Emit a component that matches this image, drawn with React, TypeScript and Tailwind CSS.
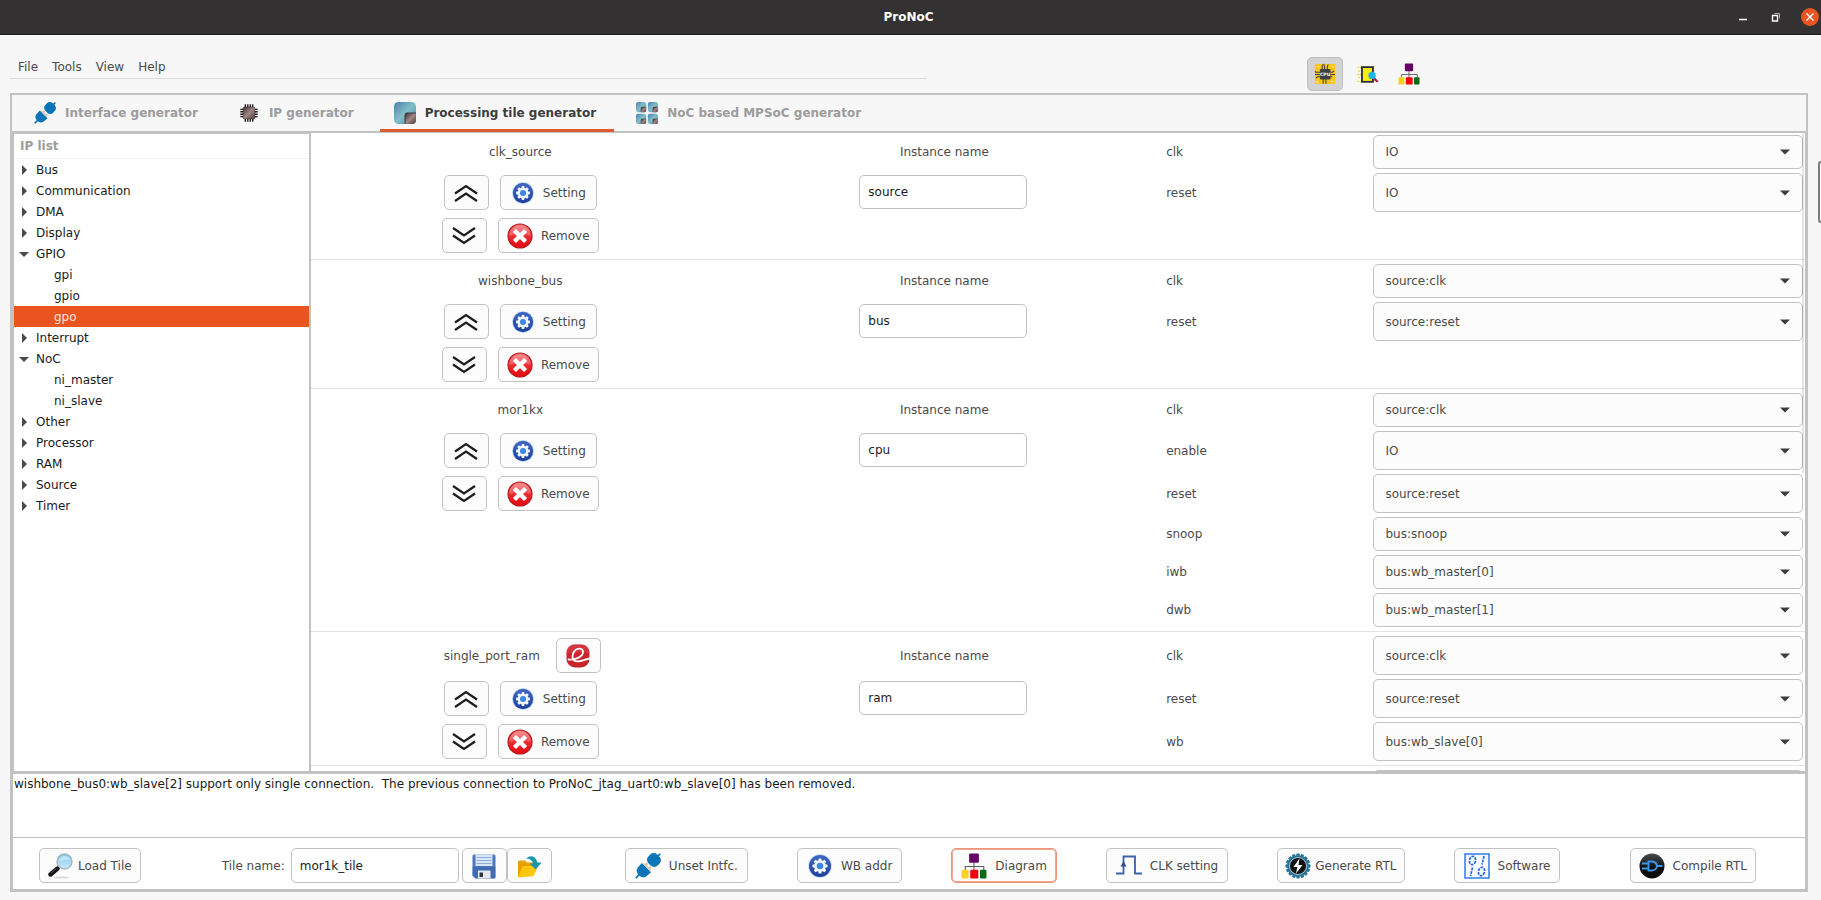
import { useState } from "react";
import type { ReactNode } from "react";

type Node = { name: string; open?: boolean; children?: string[] };

type Port = { name: string; value: string };

type Device = { module: string; instance: string; hasEditor?: boolean; ports: Port[] };

const IP_LIST: Node[] = [
  { name: "Bus" },
  { name: "Communication" },
  { name: "DMA" },
  { name: "Display" },
  { name: "GPIO", open: true, children: ["gpi", "gpio", "gpo"] },
  { name: "Interrupt" },
  { name: "NoC", open: true, children: ["ni_master", "ni_slave"] },
  { name: "Other" },
  { name: "Processor" },
  { name: "RAM" },
  { name: "Source" },
  { name: "Timer" },
];

const DEVICES: Device[] = [
  {
    module: "clk_source",
    instance: "source",
    ports: [
      { name: "clk", value: "IO" },
      { name: "reset", value: "IO" },
    ],
  },
  {
    module: "wishbone_bus",
    instance: "bus",
    ports: [
      { name: "clk", value: "source:clk" },
      { name: "reset", value: "source:reset" },
    ],
  },
  {
    module: "mor1kx",
    instance: "cpu",
    ports: [
      { name: "clk", value: "source:clk" },
      { name: "enable", value: "IO" },
      { name: "reset", value: "source:reset" },
      { name: "snoop", value: "bus:snoop" },
      { name: "iwb", value: "bus:wb_master[0]" },
      { name: "dwb", value: "bus:wb_master[1]" },
    ],
  },
  {
    module: "single_port_ram",
    instance: "ram",
    hasEditor: true,
    ports: [
      { name: "clk", value: "source:clk" },
      { name: "reset", value: "source:reset" },
      { name: "wb", value: "bus:wb_slave[0]" },
    ],
  },
];

const MESSAGE =
  "wishbone_bus0:wb_slave[2] support only single connection.  The previous connection to ProNoC_jtag_uart0:wb_slave[0] has been removed.";

const BUTTON =
  "flex h-[35px] shrink-0 items-center justify-center rounded-[5px] border border-[#c2c2c2] bg-[#fcfcfc] text-[#4a4a4a] hover:bg-white";

const TEETH = [0, 45, 90, 135, 180, 225, 270, 315];

// Gradients shared by every icon below.
function IconDefs() {
  return (
    <svg className="absolute size-0" aria-hidden="true">
      <defs>
        <linearGradient id="tile" x1="0" y1="0" x2="1" y2="1">
          <stop offset="0" stopColor="#4a80b0" />
          <stop offset="0.5" stopColor="#83bfc8" />
          <stop offset="1" stopColor="#3f86a6" />
        </linearGradient>
        <linearGradient id="core" x1="0" y1="0" x2="1" y2="1">
          <stop offset="0" stopColor="#3f2f31" />
          <stop offset="0.5" stopColor="#a08585" />
          <stop offset="1" stopColor="#4f3d3f" />
        </linearGradient>
        <linearGradient id="blue" x1="0" y1="0" x2="0" y2="1">
          <stop offset="0" stopColor="#4268c4" />
          <stop offset="1" stopColor="#1c3f9a" />
        </linearGradient>
        <linearGradient id="red" x1="0" y1="0" x2="0" y2="1">
          <stop offset="0" stopColor="#f3797b" />
          <stop offset="0.5" stopColor="#ea2d33" />
          <stop offset="1" stopColor="#e6060d" />
        </linearGradient>
        <linearGradient id="lens" x1="0" y1="0" x2="0" y2="1">
          <stop offset="0" stopColor="#79c6ea" />
          <stop offset="1" stopColor="#c9ecfb" />
        </linearGradient>
        <linearGradient id="dark" x1="0" y1="0" x2="0" y2="1">
          <stop offset="0" stopColor="#4a4d50" />
          <stop offset="0.6" stopColor="#0c0d0f" />
        </linearGradient>
      </defs>
    </svg>
  );
}

function Svg({ className, box = "0 0 24 24", children }: { className: string; box?: string; children: ReactNode }) {
  return (
    <svg className={className} viewBox={box} fill="none" aria-hidden="true">
      {children}
    </svg>
  );
}

function PlugIcon({ className }: { className: string }) {
  return (
    <Svg className={className}>
      <g transform="rotate(45 12 12)">
        <path d="M12 -4v5M12 23v5" stroke="#0b75b8" strokeWidth="1.6" />
        <rect x="6" y="-1.5" width="12" height="11.5" rx="4.5" fill="#0b75b8" />
        <path d="M9 10.5h2v4H9zM13.5 10.5h2v3h-2z" fill="#d8c9a6" />
        <path d="M6 14h12l-.4 6q-1 4-5.6 4t-5.600-4z" fill="#0b75b8" />
        <path d="M7.500 13.200h9" stroke="#d3cdbd" strokeWidth="1.6" />
      </g>
    </Svg>
  );
}

function ChipIcon({ className }: { className: string }) {
  return (
    <Svg className={className}>
      <path
        d="M8 2.500v19M10.700 2.500v19M13.400 2.500v19M16 2.500v19M2.500 8h19M2.500 10.700h19M2.500 13.400h19M2.500 16h19"
        stroke="#241a1c"
        strokeWidth="1.500"
      />
      <rect x="5.500" y="5.500" width="13" height="13" rx="1.500" fill="url(#core)" stroke="#3a2c2e" strokeWidth="0.600" />
    </Svg>
  );
}

function TileShape() {
  return (
    <>
      <rect width="24" height="24" rx="5" fill="url(#tile)" />
      <path d="M12 14q0-2 2-2h10v8q0 4-4 4h-8z" fill="url(#core)" />
      <path d="M12 24V14q0-2 2-2h10" stroke="#33363d" strokeWidth="1" />
    </>
  );
}

function TileIcon({ className }: { className: string }) {
  return (
    <Svg className={className}>
      <TileShape />
    </Svg>
  );
}

function MpsocIcon({ className }: { className: string }) {
  return (
    <Svg className={className} box="0 0 52 52">
      <TileShape />
      <g transform="translate(28 0)">
        <TileShape />
      </g>
      <g transform="translate(0 28)">
        <TileShape />
      </g>
      <g transform="translate(28 28)">
        <TileShape />
      </g>
    </Svg>
  );
}

function CpuIcon({ className }: { className: string }) {
  return (
    <Svg className={className}>
      <rect x="1" y="1" width="22" height="22" rx="1" fill="#fcc419" />
      <path d="M2 20l3 2M19 3l3 2M3 4h3M18 20h4" stroke="#ffe58a" strokeWidth="1.4" />
      <path
        d="M9 8V1.500M11.500 8V4l-1-3M14.500 8V4l1-2.500M10 16v6.500M13 16v6.500M8 10H2l-1-1M8 12.500H1M8 15H4l-2 1.500M16 10h4l2-1.500M16 12.500h7M16 15h4"
        stroke="#3a3a42"
        strokeWidth="1.100"
      />
      <rect x="6.500" y="6.500" width="11.500" height="11.500" rx="1" fill="#3f4048" />
      <text x="12.200" y="14.200" textAnchor="middle" fontSize="5" fontWeight="700" fill="#ffffff">
        CPU
      </text>
    </Svg>
  );
}

function InspectIcon({ className }: { className: string }) {
  return (
    <Svg className={className}>
      <path
        d="M1 5h5M2 9h3M1 12.500h5M2 16h3M1 20h5M19 4h3M19 19h3"
        stroke="#f2d64b"
        strokeWidth="1.500"
        strokeDasharray="2 1"
      />
      <rect x="6.500" y="4.500" width="12" height="16" fill="#f8ec10" stroke="#2f2f2f" strokeWidth="2" />
      <path d="M19.500 16.500l4 4" stroke="#b3125e" strokeWidth="2.400" />
      <circle cx="17.500" cy="13.500" r="4" fill="#1fb5ec" />
    </Svg>
  );
}

function DiagramIcon({ className }: { className: string }) {
  return (
    <Svg className={className}>
      <path d="M12 9v7M4 16v-3.500h17V16" stroke="#5c5c5c" strokeWidth="1" />
      <rect x="7.500" y="0.500" width="9" height="8.500" rx="1" fill="#660066" />
      <rect x="0.500" y="15.500" width="6.500" height="8" rx="1" fill="#ffd021" />
      <rect x="8.500" y="15.500" width="7.500" height="8" rx="1" fill="#f6000c" />
      <rect x="17.500" y="15.500" width="6" height="8" rx="1" fill="#076b13" />
    </Svg>
  );
}

function GearIcon({ className }: { className: string }) {
  return (
    <Svg className={className} box="0 0 26 26">
      <circle cx="13" cy="13" r="12" fill="#cfe4fa" />
      <circle cx="13" cy="13" r="11" fill="url(#blue)" />
      <g fill="#f1f6ff">
        {TEETH.map((a) => (
          <rect key={a} x="11.500" y="5.500" width="3" height="3.500" rx="0.600" transform={`rotate(${a} 13 13)`} />
        ))}
      </g>
      <circle cx="13" cy="13" r="4.600" fill="#3f86e6" stroke="#f1f6ff" strokeWidth="2.600" />
    </Svg>
  );
}

function RemoveIcon({ className }: { className: string }) {
  return (
    <Svg className={className} box="0 0 26 26">
      <circle cx="13" cy="13" r="12" fill="url(#red)" stroke="#b81a20" strokeWidth="1.200" />
      <path d="M2.500 13q0-10 10.500-10.500T23.500 13q-10-4-21 0z" fill="#ffffff" opacity="0.200" />
      <path d="M9 9l8 8M17 9l-8 8" stroke="#ffffff" strokeWidth="4.400" strokeLinecap="square" />
    </Svg>
  );
}

function ScriptIcon({ className }: { className: string }) {
  return (
    <Svg className={className}>
      <rect x="0.500" y="0.500" width="23" height="23" rx="8.500" fill="#c9252d" />
      <path d="M.5 9q0-8.500 8.500-8.500h6q8.500 0 8.500 8.500z" fill="#d94148" opacity="0.600" />
      <path
        d="M2.500 15.500c6.500.5 14.500-2.500 14.500-7.400 0-2.300-1.800-3.400-3.900-3.400-3.700 0-6.600 3.700-6.600 7.700 0 3.500 2.300 5 5.500 5 4 0 7.400-2.200 11.500-2.900"
        stroke="#ffffff"
        strokeWidth="1.800"
        strokeLinecap="round"
      />
    </Svg>
  );
}

function UpIcon() {
  return (
    <Svg className="h-[18px] w-6" box="0 0 24 18">
      <path d="M1 9.500L12 2l11 7.500M1 17l11-7.500L23 17" stroke="#1c1c1c" strokeWidth="2.200" />
    </Svg>
  );
}

function DownIcon() {
  return (
    <Svg className="h-[18px] w-6" box="0 0 24 18">
      <path d="M1 1l11 7.500L23 1M1 8.500L12 16l11-7.500" stroke="#1c1c1c" strokeWidth="2.200" />
    </Svg>
  );
}

function MagnifierIcon({ className }: { className: string }) {
  return (
    <Svg className={className} box="0 0 26 26">
      <ellipse cx="13" cy="24.500" rx="8" ry="1" fill="#d9d9d9" />
      <path d="M11 14l-3 3" stroke="#9aa0a6" strokeWidth="2" />
      <path d="M9.500 15.500L2.500 21.500" stroke="#151515" strokeWidth="4.400" strokeLinecap="round" />
      <path d="M8.500 15.500L3 20" stroke="#6a6a6a" strokeWidth="0.800" />
      <circle cx="16.500" cy="8.500" r="7.500" fill="url(#lens)" stroke="#a9b4bb" strokeWidth="1.400" />
      <path d="M11 8q1-4.500 6-5 4 .500 5 4-5-1-11 1z" fill="#ffffff" opacity="0.450" />
    </Svg>
  );
}

function SaveIcon({ className }: { className: string }) {
  return (
    <Svg className={className} box="0 0 26 26">
      <path d="M1.500 3q0-1.500 1.500-1.500h20q1.500 0 1.500 1.500v21q0 1.500-1.500 1.500H4.500l-3-3z" fill="#4b76bd" />
      <path d="M1.500 14h23v10q0 1.500-1.500 1.500H4.500l-3-3z" fill="#3a61a8" opacity="0.500" />
      <rect x="4.500" y="1.500" width="17" height="11.500" fill="#d8e5f6" />
      <path d="M5.500 4.500h15M5.500 7.500h15M5.500 10.500h15" stroke="#8eacd8" strokeWidth="1" />
      <rect x="7" y="17.500" width="12.500" height="8" fill="#e6e8ea" />
      <rect x="8.500" y="19.500" width="3.500" height="4.500" fill="#2b3442" />
    </Svg>
  );
}

function OpenIcon({ className }: { className: string }) {
  return (
    <Svg className={className} box="0 0 26 26">
      <path d="M2 24V9q0-1.500 1.500-1.500H9l2 2h8.500V14L16 22z" fill="#e6a000" />
      <path d="M2 24.500L6 14.500q.5-1.500 2-1.500h14l-3.500 8.500q-.5 1.500-2 1.800z" fill="#fcc70d" />
      <path d="M10 5.500Q18-.5 21.500 9.500h4l-5.800 7-6-6h3.500q-1.700-5-7.200-5z" fill="#1796ad" />
    </Svg>
  );
}

function ClockIcon({ className }: { className: string }) {
  return (
    <Svg className={className} box="0 0 26 26">
      <path d="M0 20.500h7.500V3.500h11.500v17h7" stroke="#3a64a6" strokeWidth="1.800" />
      <path d="M7.500 8l3 5.500h-6z" fill="#2f4f86" />
    </Svg>
  );
}

function GenerateIcon({ className }: { className: string }) {
  return (
    <Svg className={className} box="0 0 26 26">
      <g fill="#24739a">
        {[...TEETH, 22, 67, 112, 157, 202, 247, 292, 337].map((a) => (
          <rect key={a} x="11.300" y="0.500" width="3.400" height="4" rx="1" transform={`rotate(${a} 13 13)`} />
        ))}
      </g>
      <circle cx="13" cy="13" r="10.600" fill="#24739a" />
      <circle cx="13" cy="13" r="8.500" fill="#101214" stroke="#d5e4ec" strokeWidth="0.800" />
      <path d="M14.500 5.500L8.500 14h3.800L11 20.500 17.500 12h-4z" fill="#ffffff" />
    </Svg>
  );
}

function SoftwareIcon({ className }: { className: string }) {
  return (
    <Svg className={className} box="0 0 26 26">
      <rect x="1" y="1" width="24" height="24" fill="#f7fbff" stroke="#2f7bea" strokeWidth="1.500" />
      <g stroke="#2468e0" strokeWidth="1.700" strokeDasharray="2.800 0.900">
        <ellipse cx="8.500" cy="7.500" rx="3" ry="4.300" transform="rotate(14 8.500 7.500)" />
        <ellipse cx="17.500" cy="18.500" rx="3" ry="4.300" transform="rotate(14 17.500 18.500)" />
        <path d="M20 3l-2 8.500M8.500 14.500l-2 8.500" />
      </g>
    </Svg>
  );
}

function CompileIcon({ className }: { className: string }) {
  return (
    <Svg className={className} box="0 0 26 26">
      <circle cx="13" cy="13" r="12.500" fill="url(#dark)" />
      <path
        d="M9.500 8.500h3.500q4.500.5 5 4.500-.5 4-5 4.500H9.500zM3 10.500h6M3 15.500h6M18 13h5.500"
        stroke="#3d95e8"
        strokeWidth="1.900"
      />
    </Svg>
  );
}

const TABS = [
  { label: "Interface generator", icon: PlugIcon },
  { label: "IP generator", icon: ChipIcon },
  { label: "Processing tile generator", icon: TileIcon },
  { label: "NoC based MPSoC generator", icon: MpsocIcon },
];

const MODES = [
  { label: "Processing tile", icon: CpuIcon },
  { label: "Inspect", icon: InspectIcon },
  { label: "Diagram", icon: DiagramIcon },
];

const ACTIONS = [
  { label: "Unset Intfc.", icon: PlugIcon, spacing: "gap-2 px-[9px]" },
  { label: "WB addr", icon: GearIcon, spacing: "gap-2 px-[9px]" },
  { label: "Diagram", icon: DiagramIcon, spacing: "gap-2 px-[9px]" },
  { label: "CLK setting", icon: ClockIcon, spacing: "gap-2 px-[9px]" },
  { label: "Generate RTL", icon: GenerateIcon, spacing: "gap-1 px-[7px]" },
  { label: "Software", icon: SoftwareIcon, spacing: "gap-2 px-[9px]" },
];

function TitleBar() {
  return (
    <header className="relative flex h-[35px] shrink-0 items-center justify-end border-b border-[#1f1d1d] bg-[#333131] text-white">
      <h1 className="absolute inset-x-0 pr-1 text-center text-xs font-bold">ProNoC</h1>
      <div className="relative flex items-center gap-[17px] pr-0.5">
        <button type="button" aria-label="Minimize" className="flex size-4 items-center justify-center">
          <Svg className="size-4" box="0 0 16 16">
            <path d="M4 10.500h8" stroke="#ffffff" strokeWidth="1.500" />
          </Svg>
        </button>
        <button type="button" aria-label="Restore" className="flex size-4 items-center justify-center">
          <Svg className="size-4" box="0 0 16 16">
            <path d="M4.500 6.500h5v5.500h-5z" stroke="#ffffff" strokeWidth="1.400" />
            <path d="M6.500 4.500h5v5" stroke="#b0b0b0" strokeWidth="1" />
          </Svg>
        </button>
        <button
          type="button"
          aria-label="Close"
          className="flex size-[18px] items-center justify-center rounded-full bg-[#e95420]"
        >
          <Svg className="size-2" box="0 0 8 8">
            <path d="M.5.5l7 7M7.500.5l-7 7" stroke="#ffffff" strokeWidth="1.500" />
          </Svg>
        </button>
      </div>
    </header>
  );
}

function MenuBar() {
  const [mode, setMode] = useState("Processing tile");

  return (
    <div className="grid h-[58px] shrink-0 grid-cols-[927fr_380fr_514fr] items-start">
      <nav className="mt-5 ml-2.5 flex h-6 border-b border-[#dadada] pl-px text-[#4a4a4a]">
        {["File", "Tools", "View", "Help"].map((m) => (
          <button key={m} type="button" className="px-[7px] hover:text-black">
            {m}
          </button>
        ))}
      </nav>
      <div />
      <div className="mt-[22px] flex gap-1.5">
        {MODES.map(({ label, icon: Icon }) => (
          <button
            key={label}
            type="button"
            aria-label={label}
            aria-pressed={mode === label}
            onClick={() => setMode(label)}
            className={`flex h-[34px] w-9 items-center justify-center rounded-[5px] border ${mode === label ? "border-[#bdbdbd] bg-[#d3d3d3]" : "border-transparent"}`}
          >
            <Icon className="size-[22px]" />
          </button>
        ))}
      </div>
    </div>
  );
}

function IpTree() {
  const [selected, setSelected] = useState("gpo");
  const [open, setOpen] = useState<Record<string, boolean>>(
    Object.fromEntries(IP_LIST.map((n) => [n.name, Boolean(n.open)])),
  );

  return (
    <aside className="w-[298px] shrink-0 overflow-hidden border-t border-r-2 border-l border-[#c2c2c2] bg-white">
      <h2 className="ml-0.5 h-[25px] border-b border-[#efefef] pl-1 leading-6 font-bold text-[#9c9c9c]">IP list</h2>
      <ul>
        {IP_LIST.map((n) => (
          <li key={n.name}>
            <button
              type="button"
              aria-expanded={open[n.name]}
              onClick={() => setOpen({ ...open, [n.name]: !open[n.name] })}
              className="flex h-[21px] w-full items-center gap-[7px] pl-[5px] text-left text-[#1a1a1a]"
            >
              <Svg className="size-2.5" box="0 0 10 10">
                {open[n.name] ? <path d="M0 3h10L5 8z" fill="#4a4a4a" /> : <path d="M3 0v10l5-5z" fill="#4a4a4a" />}
              </Svg>
              {n.name}
            </button>
            {open[n.name] && n.children && (
              <ul>
                {n.children.map((c) => (
                  <li key={c}>
                    <button
                      type="button"
                      onClick={() => setSelected(c)}
                      className={`flex h-[21px] w-full items-center pl-10 text-left ${selected === c ? "bg-[#e95420] text-[#fbe3da]" : "text-[#1a1a1a]"}`}
                    >
                      {c}
                    </button>
                  </li>
                ))}
              </ul>
            )}
          </li>
        ))}
      </ul>
    </aside>
  );
}

function PortSelect({ id, value }: { id: string; value: string }) {
  return (
    <div className="relative mx-0.5 my-0.5 flex min-h-[34px]">
      <select
        id={id}
        aria-label={value ? undefined : id}
        defaultValue={value}
        className="w-full appearance-none rounded-[5px] border border-[#c2c2c2] bg-[#fcfcfc] pl-[11px] text-[#4a4a4a]"
      >
        <option value={value}>{value}</option>
      </select>
      <Svg className="pointer-events-none absolute top-1/2 right-[13px] h-1.5 w-2.5 -translate-y-1/2" box="0 0 10 6">
        <path d="M0 .5h10L5 5.500z" fill="#3c3c3c" />
      </Svg>
    </div>
  );
}

function DeviceControls({ device, row }: { device: Device; row: number }) {
  if (row === 0) {
    return (
      <>
        <span className={device.hasEditor ? "ml-1" : ""}>{device.module}</span>
        {device.hasEditor && (
          <button type="button" aria-label="Edit linker" className={`${BUTTON} my-1 ml-4 w-[45px]`}>
            <ScriptIcon className="size-6" />
          </button>
        )}
      </>
    );
  }
  if (row === 1) {
    return (
      <>
        <button type="button" aria-label="Move up" className={`${BUTTON} my-1 mr-[11px] w-[45px]`}>
          <UpIcon />
        </button>
        <button type="button" className={`${BUTTON} my-1 w-[97px] gap-2`}>
          <GearIcon className="size-6" />
          Setting
        </button>
      </>
    );
  }
  if (row === 2) {
    return (
      <>
        <button type="button" aria-label="Move down" className={`${BUTTON} my-1 mr-[11px] w-[45px]`}>
          <DownIcon />
        </button>
        <button type="button" className={`${BUTTON} my-1 w-[101px] gap-2`}>
          <RemoveIcon className="size-[26px]" />
          Remove
        </button>
      </>
    );
  }
  return null;
}

function DeviceSection({ device }: { device: Device }) {
  const rows = Array.from({ length: Math.max(3, device.ports.length) }, (_, i) => i);
  const nameId = `${device.module}-name`;

  return (
    <section className="mb-0.5 border-b border-[#e2e2e2] pb-0.5 text-[#4a4a4a]">
      {rows.map((row) => {
        const port = device.ports[row];
        const portId = `${device.module}-${row}`;
        return (
          <div key={row} className="grid grid-cols-[418fr_427fr_214fr_433fr]">
            <div className="flex items-center justify-center">
              <DeviceControls device={device} row={row} />
            </div>
            <div className="flex items-center justify-center">
              {row === 0 && (
                <label htmlFor={nameId} className="pl-0.5">
                  Instance name
                </label>
              )}
              {row === 1 && (
                <input
                  id={nameId}
                  defaultValue={device.instance}
                  className="my-1 h-[34px] w-[168px] self-start rounded-[5px] border border-[#c2c2c2] bg-white px-2 text-[#1a1a1a]"
                />
              )}
            </div>
            {port ? (
              <label htmlFor={portId} className="flex items-center pl-[9px]">
                {port.name}
              </label>
            ) : (
              <div />
            )}
            {port ? <PortSelect id={portId} value={port.value} /> : <div />}
          </div>
        );
      })}
    </section>
  );
}

function BottomBar() {
  const [active, setActive] = useState("Diagram");

  return (
    <div className="flex h-[51px] shrink-0 items-center justify-between pt-1 pr-[49px] pl-[26px]">
      <button type="button" className={`${BUTTON} gap-1 px-2`}>
        <MagnifierIcon className="size-[26px]" />
        Load Tile
      </button>

      <div className="flex items-center pr-1 pl-3 text-[#4a4a4a]">
        <label htmlFor="tile-name">Tile name:</label>
        <input
          id="tile-name"
          defaultValue="mor1k_tile"
          className="ml-1.5 h-[35px] w-[168px] rounded-[5px] border border-[#c2c2c2] bg-white px-2 text-[#1a1a1a]"
        />
        <button type="button" aria-label="Save" className={`${BUTTON} ml-[3px] w-[45px]`}>
          <SaveIcon className="size-[26px]" />
        </button>
        <button type="button" aria-label="Open" className={`${BUTTON} w-[45px]`}>
          <OpenIcon className="size-[26px]" />
        </button>
      </div>

      <div className="flex items-center gap-[49px]">
        {ACTIONS.map(({ label, icon: Icon, spacing }) => (
          <button
            key={label}
            type="button"
            onClick={() => setActive(label)}
            className={`flex h-[35px] items-center rounded-[5px] border bg-[#fcfcfc] text-[#4a4a4a] ${spacing} ${active === label ? "border-[#eb9477] ring-1 ring-[#f0a990] ring-inset" : "border-[#c2c2c2]"}`}
          >
            <Icon className="size-[26px]" />
            {label}
          </button>
        ))}
      </div>

      <button type="button" className={`${BUTTON} gap-2 px-2`}>
        <CompileIcon className="size-[26px]" />
        Compile RTL
      </button>
    </div>
  );
}

export default function App() {
  const [tab, setTab] = useState("Processing tile generator");

  return (
    <div className="relative flex h-screen flex-col overflow-hidden bg-[#f7f7f7] font-['DejaVu_Sans',sans-serif] text-xs">
      <IconDefs />
      <TitleBar />
      <MenuBar />

      <main className="mr-[13px] mb-2 ml-2.5 flex min-h-0 flex-1 flex-col border-2 border-[#c2c2c2]">
        <div role="tablist" className="flex h-[38px] shrink-0 gap-2 border-b-2 border-[#c2c2c2] pl-2">
          {TABS.map(({ label, icon: Icon }) => (
            <button
              key={label}
              type="button"
              role="tab"
              aria-selected={tab === label}
              onClick={() => setTab(label)}
              className={`-mb-px flex items-center gap-[9px] border-b-3 pt-0.5 pr-[18px] pl-3.5 font-bold ${tab === label ? "border-[#e05a30] text-[#3d3d3d]" : "border-transparent text-[#9c9c9c]"}`}
            >
              <Icon className="size-[22px]" />
              {label}
            </button>
          ))}
        </div>

        <div className="flex min-h-0 flex-1 flex-col border-x border-b border-[#c2c2c2] bg-white">
          <div className="flex min-h-0 flex-1">
            <IpTree />
            <div className="relative min-w-0 flex-1">
              <div className="h-full overflow-auto [scrollbar-width:none]">
                {DEVICES.map((d) => (
                  <DeviceSection key={d.module} device={d} />
                ))}
                <div className="grid grid-cols-[1059fr_433fr]">
                  <div />
                  <PortSelect id="next-device" value="" />
                </div>
              </div>
              <div className="pointer-events-none absolute top-0 right-px h-[340px] w-0.5 bg-black/10" />
            </div>
          </div>

          <textarea
            aria-label="Messages"
            readOnly
            defaultValue={MESSAGE}
            className="h-[67px] shrink-0 resize-none border-t-3 border-b border-[#c2c2c2] bg-white px-px py-0.5 text-[#1a1a1a] outline-none"
          />
          <BottomBar />
        </div>
      </main>

      <div className="absolute top-[161px] right-0 h-[62px] w-[3px] rounded-l-[4px] border-2 border-r-0 border-[#7d7d7d] bg-white" />
    </div>
  );
}
